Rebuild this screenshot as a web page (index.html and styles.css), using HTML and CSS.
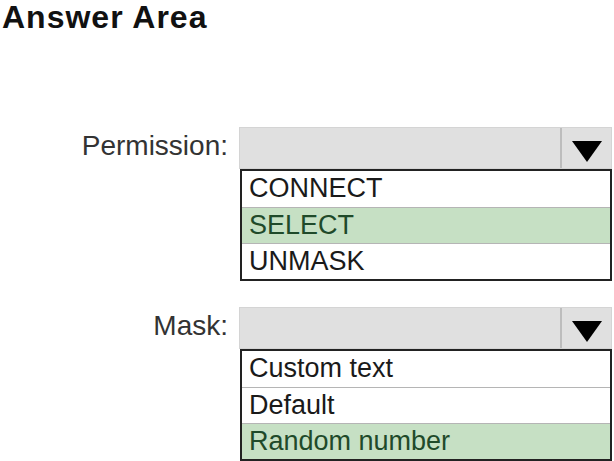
FILE: index.html
```html
<!DOCTYPE html>
<html lang="en">
  <head>
    <meta charset="UTF-8" />
    <meta name="viewport" content="width=device-width, initial-scale=1.0" />
    <title>Answer Area</title>
    <link rel="stylesheet" href="styles.css">
  </head>
  <body>
    <h1 class="title">Answer Area</h1>

    <div class="answers">
      <div class="field">
        <label class="field-label">Permission:</label>
        <div class="dropdown">
          <div class="dropdown-box">
            <div class="dropdown-value"></div>
            <div class="dropdown-arrow"><span class="triangle"></span></div>
          </div>
          <ul class="options">
            <li>CONNECT</li>
            <li class="selected">SELECT</li>
            <li>UNMASK</li>
          </ul>
        </div>
      </div>

      <div class="field">
        <label class="field-label">Mask:</label>
        <div class="dropdown">
          <div class="dropdown-box">
            <div class="dropdown-value"></div>
            <div class="dropdown-arrow"><span class="triangle"></span></div>
          </div>
          <ul class="options">
            <li>Custom text</li>
            <li>Default</li>
            <li class="selected">Random number</li>
          </ul>
        </div>
      </div>
    </div>
  </body>
</html>
```

FILE: styles.css
```css
body {
  font-family: "Liberation Sans", Arial, sans-serif;
  margin: 0;
  padding: 0;
  background: #fff;
  color: #222;
}
.title {
  margin: 0;
  padding-left: 2px;
  font-size: 32px;
  line-height: 34px;
  font-weight: bold;
  letter-spacing: 1px;
  color: #111;
}
.answers {
  margin-top: 93px;
  display: flex;
  flex-direction: column;
  gap: 26px;
}
.field {
  display: grid;
  grid-template-columns: 228px 373px;
  column-gap: 11px;
  align-items: start;
}
.field-label {
  text-align: right;
  font-size: 28px;
  line-height: 38px;
  color: #333;
}
.dropdown-box {
  height: 42px;
  box-sizing: border-box;
  display: flex;
  background-color: #e0e0e0;
  border: 1px solid #d4d4d4;
}
.dropdown-value {
  flex: 1;
}
.dropdown-arrow {
  width: 51px;
  border-left: 2px solid #bdbdbd;
  display: flex;
  justify-content: center;
  padding-top: 13px;
  box-sizing: border-box;
}
.triangle {
  width: 0;
  height: 0;
  border-left: 15px solid transparent;
  border-right: 15px solid transparent;
  border-top: 21px solid #000;
}
.options {
  list-style: none;
  margin: 0 0 0 1px;
  padding: 0;
  border: 2px solid #222;
  background: #fff;
}
.options li {
  height: 35px;
  padding-left: 7px;
  font-size: 27px;
  line-height: 35px;
  color: #1a1a1a;
  border-top: 1px solid #b5b5b5;
}
.options li:first-child {
  border-top: none;
  height: 36px;
}
.options li.selected {
  background-color: #c6e0c4;
  color: #1f4a2a;
}
```
